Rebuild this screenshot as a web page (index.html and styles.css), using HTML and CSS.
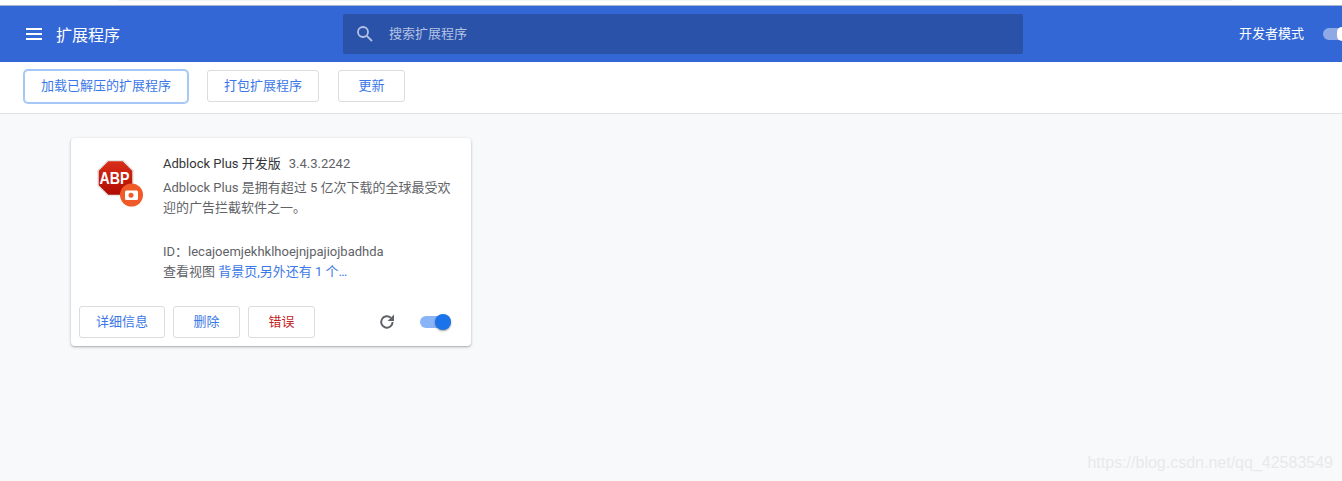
FILE: index.html
```html
<!DOCTYPE html>
<html lang="zh-CN">
<head>
<meta charset="utf-8">
<title>扩展程序</title>
<link rel="stylesheet" href="styles.css">
</head>
<body>
<div class="topstrip"></div>
<header class="header">
  <div class="header-left">
    <svg class="menu-icon" width="16" height="12" viewBox="0 0 16 12"><path d="M0 1h16M0 6h16M0 11h16" stroke="#fff" stroke-width="2" fill="none"/></svg>
    <span class="title">扩展程序</span>
  </div>
  <div class="search">
    <svg class="search-icon" width="18" height="18" viewBox="0 0 18 18"><circle cx="7" cy="7" r="5" stroke="#b4c2e4" stroke-width="1.800" fill="none"/><path d="M10.800 10.800L16 16" stroke="#b4c2e4" stroke-width="1.800" fill="none"/></svg>
    <span class="search-text">搜索扩展程序</span>
  </div>
  <div class="header-right">
    <span class="dev">开发者模式</span>
    <span class="dev-toggle"><span class="dev-thumb"></span></span>
  </div>
</header>
<nav class="toolbar">
  <button class="btn btn-load">加载已解压的扩展程序</button>
  <button class="btn btn-pack">打包扩展程序</button>
  <button class="btn btn-update">更新</button>
</nav>
<main class="main">
  <section class="card">
    <div class="card-body">
      <svg class="logo" width="50" height="50" viewBox="0 0 50 50">
        <defs>
          <linearGradient id="abp" x1="0" y1="0" x2="0" y2="1"><stop offset="0" stop-color="#d8301a"/><stop offset="1" stop-color="#b00a00"/></linearGradient>
        </defs>
        <polygon points="11,0.500 26,0.500 36,10.500 36,25.500 26,35.500 11,35.500 1,25.500 1,10.500" fill="url(#abp)" stroke="#e6e6e6" stroke-width="1.500"/>
        <text x="2.500" y="24" class="abp-text" textLength="30" lengthAdjust="spacingAndGlyphs">ABP</text>
        <circle cx="34.500" cy="35" r="11.500" fill="#f05a28"/>
        <rect x="28" y="30.500" width="13" height="9.500" rx="1.500" fill="#fff"/>
        <circle cx="34" cy="35.200" r="2.500" fill="#f05a28"/>
      </svg>
      <div class="info">
        <div class="name-row"><span class="name">Adblock Plus 开发版</span><span class="version">3.4.3.2242</span></div>
        <p class="desc">Adblock Plus 是拥有超过 5 亿次下载的全球最受欢迎的广告拦截软件之一。</p>
        <div class="id-row">ID：lecajoemjekhklhoejnjpajiojbadhda</div>
        <div class="views">查看视图 <a class="link">背景页,另外还有 1 个…</a></div>
      </div>
    </div>
    <div class="card-foot">
      <button class="btn btn-detail">详细信息</button>
      <button class="btn btn-del">删除</button>
      <button class="btn btn-err">错误</button>
      <span class="spacer"></span>
      <svg class="reload" width="16" height="16" viewBox="0 0 16 16"><path d="M13.600 8a5.700 5.700 0 1 1-1.700-4.100" stroke="#5f6368" stroke-width="2" fill="none"/><path d="M15 0.600v6.400H8.600z" fill="#5f6368"/></svg>
      <span class="toggle"><span class="thumb"></span></span>
    </div>
  </section>
</main>
<div class="watermark">https://blog.csdn.net/qq_42583549</div>
</body>
</html>
```
FILE: styles.css
```css
* { box-sizing: border-box; }
html, body { margin: 0; height: 100%; overflow: hidden; }
body {
  display: flex;
  flex-direction: column;
  height: 481px;
  background: #f8f9fa;
  font-family: Roboto, "Noto Sans CJK SC", sans-serif;
  font-size: 13px;
  color: #5f6368;
  position: relative;
}
.topstrip { height: 6px; background: #fff; border-bottom: 1px solid #a9b4cc; flex: none; padding: 0 110px 0 118px; }
.topstrip::before { content: ""; display: block; height: 1px; background: #f3f3f3; }
.header {
  height: 56px;
  flex: none;
  background: #3367d6;
  display: flex;
  align-items: center;
  color: #fff;
  padding-bottom: 1px;
}
.header-left { width: 343px; flex: none; display: flex; align-items: center; padding-left: 26px; }
.menu-icon { flex: none; margin-top: 1px; }
.title { margin-left: 14px; font-size: 16px; line-height: 24px; margin-top: 5px; }
.search {
  width: 680px;
  height: 40px;
  flex: none;
  margin-top: 1px;
  background: #2a52a9;
  border-radius: 2px;
  display: flex;
  align-items: center;
  padding-left: 13px;
}
.search-text { margin-left: 15px; color: #b4c2e4; font-size: 13px; margin-bottom: 4px; }
.search-icon { flex: none; margin-top: -1px; }
.header-right { flex: 1; display: flex; align-items: center; justify-content: flex-end; overflow: hidden; }
.dev { font-size: 13px; margin-right: 19px; margin-bottom: 3px; }
.dev-toggle {
  width: 19px;
  height: 12px;
  flex: none;
  background: #8fa9e4;
  border-radius: 6px 0 0 6px;
  display: flex;
  justify-content: flex-end;
  align-items: center;
}
.dev-thumb { width: 5px; height: 14px; background: #fff; border-radius: 7px 0 0 7px; }
.toolbar {
  height: 52px;
  flex: none;
  background: #fff;
  border-bottom: 1px solid #dfe1e5;
  display: flex;
  align-items: center;
  padding-left: 24px;
  padding-bottom: 3px;
}
.btn {
  height: 32px;
  background: #fff;
  border: 1px solid #dadce0;
  border-radius: 3px;
  color: #3b78e7;
  font-family: inherit;
  font-size: 13px;
  padding: 0 0 3px;
  flex: none;
}
.btn-load {
  width: 164px;
  height: 33px;
  border: 1px solid #a6c8f6;
  box-shadow: 0 0 0 1px #a6c8f6;
  margin-right: 19px;
  border-radius: 4px;
}
.btn-pack { width: 112px; margin-right: 19px; }
.btn-update { width: 67px; }
.main { flex: 1; padding: 24px 0 0 71px; }
.card {
  width: 400px;
  height: 208px;
  background: #fff;
  border-radius: 4px;
  box-shadow: 0 1px 3px rgba(60, 64, 67, .35), 0 1px 1px rgba(60, 64, 67, .12);
  display: flex;
  flex-direction: column;
}
.card-body { flex: 1; display: flex; padding: 14px 18px 0 26px; }
.logo { flex: none; margin: 8px 16px 0 0; width: 50px; height: 50px; }
.abp-text { font-family: "Liberation Sans", sans-serif; font-weight: 700; font-size: 16.500px; fill: #fff; }
.info { flex: 1; min-width: 0; }
.name-row { height: 24px; line-height: 24px; display: flex; }
.name { color: #333538; }
.version { margin-left: 8px; }
.desc { margin: 2px 0 0; line-height: 20px; height: 40px; }
.id-row { margin-top: 24px; line-height: 20px; height: 20px; }
.views { line-height: 20px; height: 20px; }
.link { color: #3b78e7; }
.card-foot {
  height: 40px;
  flex: none;
  display: flex;
  align-items: flex-start;
  padding: 0 20px 0 8px;
}
.btn-detail { width: 86px; margin-right: 8px; }
.btn-del { width: 67px; margin-right: 8px; }
.btn-err { width: 67px; color: #c5221f; }
.spacer { flex: 1; }
.reload { margin: 8px 25px 0 0; flex: none; }
.toggle {
  width: 31px;
  height: 12px;
  margin-top: 10px;
  background: #8ab4f8;
  border-radius: 6px;
  display: flex;
  align-items: center;
  justify-content: flex-end;
  flex: none;
}
.thumb {
  width: 16px;
  height: 16px;
  background: #1a73e8;
  border-radius: 50%;
  box-shadow: 0 1px 2px rgba(0, 0, 0, .4);
  flex: none;
}
.watermark {
  position: absolute;
  right: 9px;
  bottom: 9px;
  font-family: "Liberation Sans", sans-serif;
  font-size: 16px;
  color: #e8e9ea;
}
```
